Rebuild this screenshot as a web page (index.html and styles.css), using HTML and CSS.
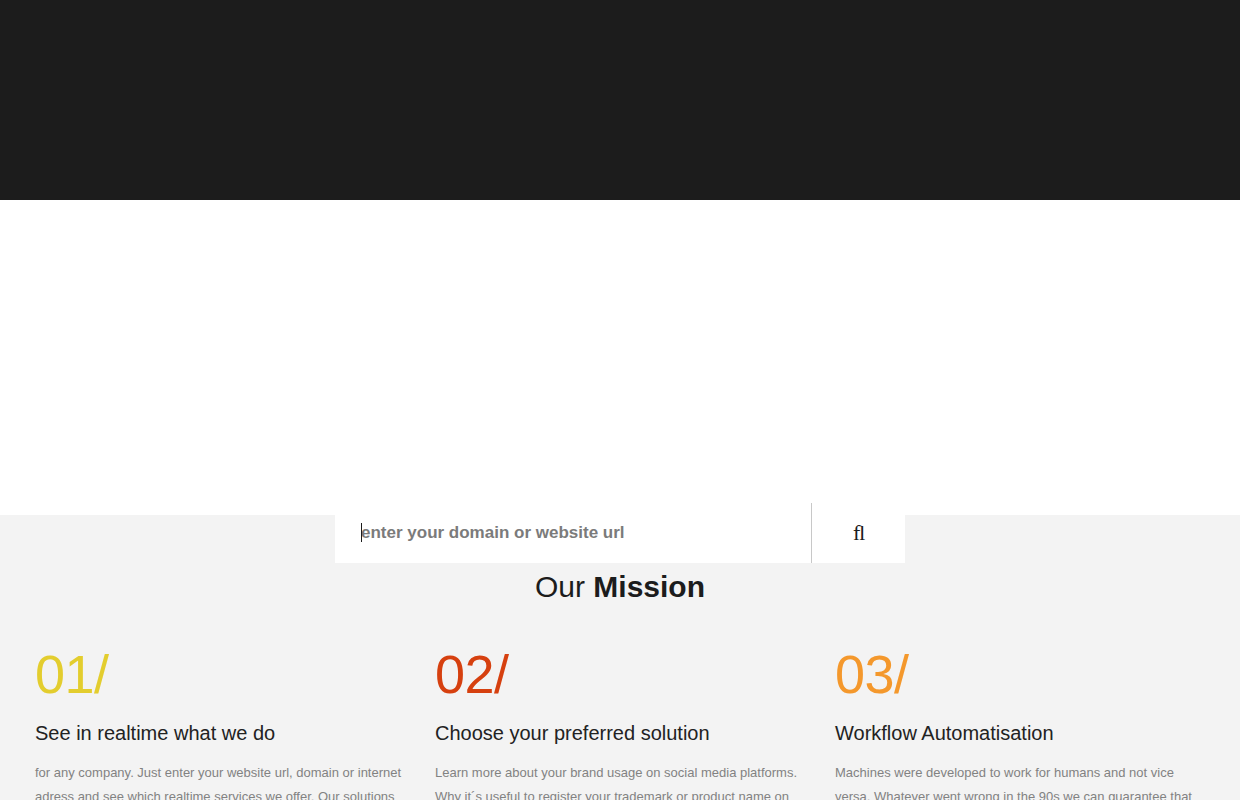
FILE: index.html
```html
<!DOCTYPE html>
<html lang="en">
<head>
  <meta charset="UTF-8" />
  <meta name="viewport" content="width=device-width, initial-scale=1.0"/>
  <title>Our Mission</title>
  <link rel="stylesheet" href="styles.css">
</head>
<body>
  <header class="hero"></header>
  <section class="blank"></section>

  <section class="mission">
    <form class="search">
      <div class="search-field">
        <input type="text" class="search-input" placeholder="enter your domain or website url" />
      </div>
      <button type="button" class="search-btn">&#xfb02;</button>
    </form>

    <h2 class="mission-title">Our <b>Mission</b></h2>

    <div class="steps">
      <div class="step">
        <div class="step-num yellow">01/</div>
        <h3>See in realtime what we do</h3>
        <p>for any company. Just enter your website url, domain or internet adress and see which realtime services we offer. Our solutions</p>
      </div>
      <div class="step">
        <div class="step-num red">02/</div>
        <h3>Choose your preferred solution</h3>
        <p>Learn more about your brand usage on social media platforms. Why it´s useful to register your trademark or product name on</p>
      </div>
      <div class="step">
        <div class="step-num orange">03/</div>
        <h3>Workflow Automatisation</h3>
        <p>Machines were developed to work for humans and not vice versa. Whatever went wrong in the 90s we can guarantee that</p>
      </div>
    </div>
  </section>
</body>
</html>
```

FILE: styles.css
```css
body {
  margin: 0;
  font-family: "Liberation Sans", Arial, sans-serif;
  background-color: #ffffff;
  color: #1c1c1c;
}

.hero {
  height: 200px;
  background-color: #1c1c1c;
}

.blank {
  height: 315px;
  background-color: #ffffff;
}

.mission {
  background-color: #f3f3f3;
  padding-bottom: 40px;
}

.search {
  display: flex;
  width: 570px;
  height: 60px;
  margin: 0 auto;
  position: relative;
  top: -12px;
  margin-bottom: -12px;
  background-color: #ffffff;
}

.search-field {
  flex: 1;
  position: relative;
  border-right: 1px solid #c8c8c8;
}

/* text caret, focused field */
.search-field::before {
  content: "";
  position: absolute;
  left: 26px;
  top: 20px;
  width: 1px;
  height: 19px;
  background-color: #1c1c1c;
}

.search-input {
  width: 100%;
  height: 100%;
  box-sizing: border-box;
  padding: 0 26px;
  border: none;
  outline: none;
  background: transparent;
  font-family: "Liberation Sans", Arial, sans-serif;
  font-size: 17px;
  font-weight: bold;
  color: #7b7b7b;
}

.search-input::placeholder {
  color: #7b7b7b;
  opacity: 1;
}

.search-btn {
  width: 93px;
  padding: 0 0 0 1px;
  border: none;
  background: #ffffff;
  color: #1c1c1c;
  font-family: "Liberation Serif", "Times New Roman", serif;
  font-size: 22px;
  cursor: pointer;
}

.mission-title {
  margin: 0;
  padding-top: 6px;
  height: 36px;
  line-height: 36px;
  text-align: center;
  font-size: 30px;
  font-weight: normal;
}

.steps {
  display: grid;
  grid-template-columns: repeat(3, 1fr);
  padding: 0 20px;
  margin-top: 39px;
}

.step {
  padding: 0 15px;
}

.step-num {
  font-size: 54px;
  letter-spacing: -0.5px;
  line-height: 60px;
}

.yellow { color: #e3cd2e; }
.red { color: #d6400f; }
.orange { color: #f4982c; }

.step h3 {
  margin: 15px 0 0;
  font-size: 20px;
  line-height: 28px;
  font-weight: normal;
  color: #222222;
}

.step p {
  margin: 14px 0 0;
  font-size: 13px;
  line-height: 24px;
  color: #828282;
}
```
